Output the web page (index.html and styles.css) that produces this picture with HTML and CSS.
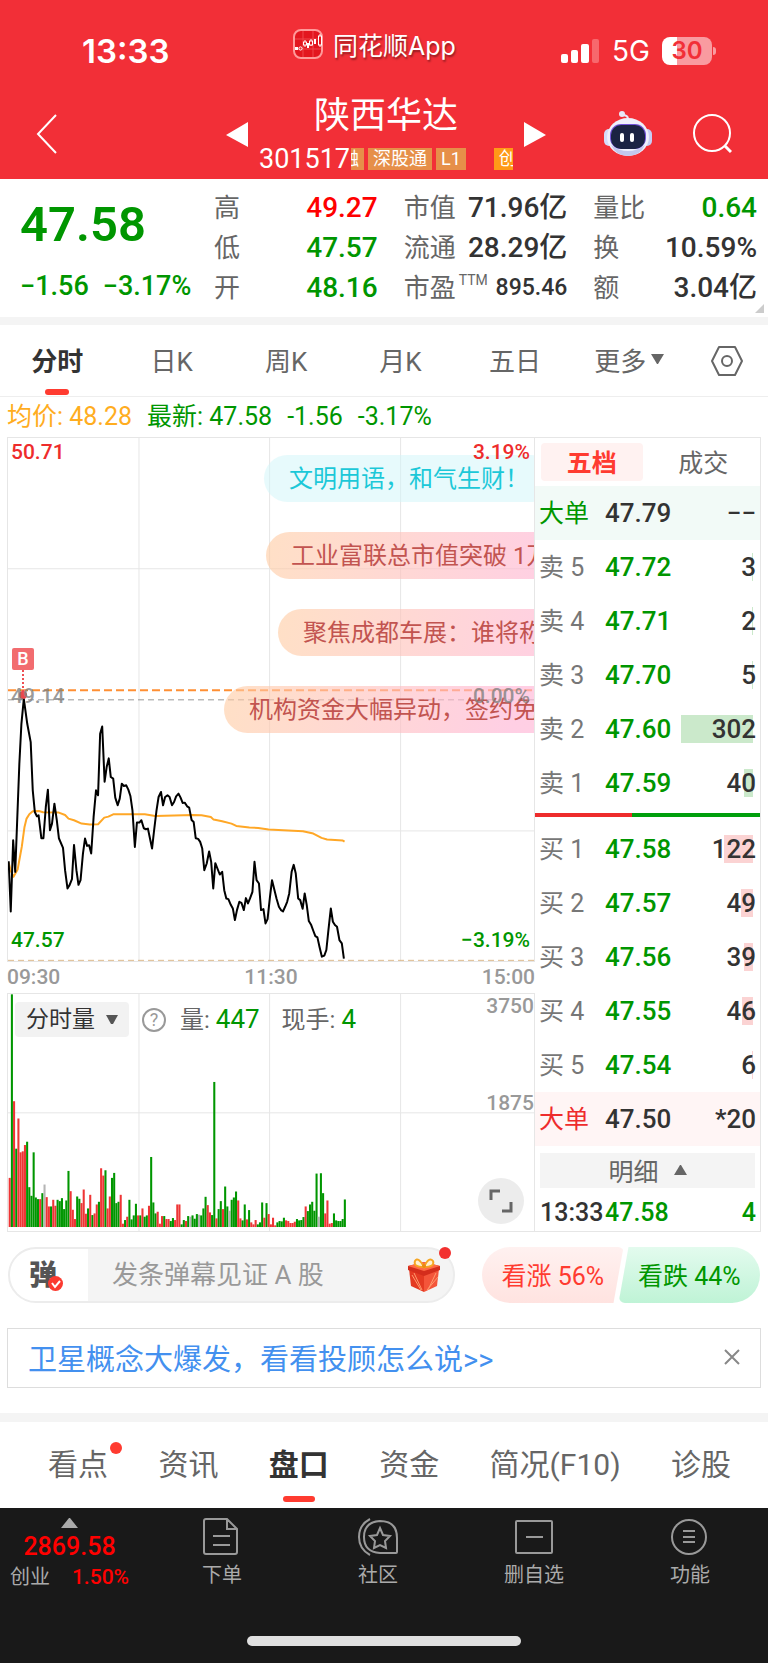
FILE: index.html
```html
<!DOCTYPE html>
<html lang="zh-CN">
<head>
<meta charset="UTF-8">
<meta name="viewport" content="width=device-width, initial-scale=1.0">
<title>陕西华达 301517</title>
<link rel="stylesheet" href="styles.css">
</head>
<body>
<header class="header">
    <div class="status">
        <span class="clock">13:33</span>
        <span class="app">
            <svg width="30" height="30" viewBox="0 0 30 30">
                <rect x="1" y="1" width="28" height="28" rx="7" fill="#e3161f" stroke="#ff9a9a" stroke-width="2"/>
                <path d="M10 2v26M20 2v26M2 10h26M2 20h26" stroke="#f0474d" stroke-width="1"/>
                <g stroke="#fff" fill="none"><circle cx="7.500" cy="19.500" r="1.600"/><path d="M12 11v7M18 10v7M27 5v13"/><rect x="10.500" y="13" width="3" height="3" fill="#e3161f"/><rect x="16.500" y="12" width="3" height="4" fill="#e3161f"/><rect x="25.500" y="7" width="3" height="9" fill="#e3161f"/></g>
                <path d="M2 18h3v3H2zM14 14h2v5h-2zM21 10h2v5h-2z" fill="#fff"/>
            </svg>
            同花顺App
        </span>
        <span class="signal">
            <svg width="40" height="26" viewBox="0 0 40 26">
                <g fill="#fff"><rect x="1" y="16" width="7" height="9" rx="2"/><rect x="11" y="12" width="7" height="13" rx="2"/><rect x="21" y="6" width="8" height="19" rx="2"/></g>
                <rect x="32" y="1" width="7" height="24" rx="2" fill="#f7686d"/>
            </svg>
            <span>5G</span>
            <span class="battery">30</span>
        </span>
    </div>
    <nav class="nav">
        <button class="icon back" aria-label="返回">
            <svg width="24" height="42" viewBox="0 0 24 42"><path d="M22 2L4 21l18 19" fill="none" stroke="#fff" stroke-width="2"/></svg>
        </button>
        <div class="stock">
            <button class="icon" aria-label="上一只"><svg width="22" height="25" viewBox="0 0 22 25"><path d="M22 0v25L0 13z" fill="#fff"/></svg></button>
            <div class="stock-name">
                <h1>陕西华达</h1>
                <div class="code">
                    <span>301517</span>
                    <div class="tags">
                        <span class="tag cut">融</span>
                        <span class="tag">深股通</span>
                        <span class="tag">L1</span>
                        <span class="tag hot">创</span>
                    </div>
                </div>
            </div>
            <button class="icon" aria-label="下一只"><svg width="22" height="25" viewBox="0 0 22 25"><path d="M0 0v25l22-12z" fill="#fff"/></svg></button>
        </div>
        <div class="actions">
            <button class="icon" aria-label="智能助手">
                <svg width="48" height="46" viewBox="0 0 48 46">
                    <path d="M24 8Q24 4 18 4" stroke="#e8e8f8" stroke-width="2" fill="none"/>
                    <circle cx="18" cy="3" r="3" fill="#e8e8f8"/>
                    <rect x="0" y="18" width="10" height="17" rx="5" fill="#d5dcfa"/><rect x="38" y="18" width="10" height="17" rx="5" fill="#c7cdf4"/>
                    <ellipse cx="24" cy="26" rx="21" ry="19" fill="#eff0fc"/>
                    <path d="M7 34q5 11 17 11t17-11q-8 6-17 6T7 34z" fill="#c3c7ee"/>
                    <rect x="6" y="13" width="36" height="25" rx="11" fill="#7252d8"/>
                    <rect x="7" y="14" width="34" height="24" rx="10" fill="#1b2343"/>
                    <rect x="16" y="22" width="4" height="9" rx="2" fill="#fff"/><rect x="26" y="22" width="4" height="9" rx="2" fill="#fff"/>
                </svg>
            </button>
            <button class="icon" aria-label="搜索">
                <svg width="40" height="40" viewBox="0 0 40 40" fill="none" stroke="#fff" stroke-width="2"><circle cx="20" cy="19" r="18"/><path d="M33 32l6 6" stroke-width="3"/></svg>
            </button>
        </div>
    </nav>
</header>

<section class="quote">
    <div class="price">
        <strong>47.58</strong>
        <p><span>−1.56</span><span>−3.17%</span></p>
    </div>
    <dl>
        <div><dt>高</dt><dd class="up">49.27</dd></div>
        <div><dt>低</dt><dd class="down">47.57</dd></div>
        <div><dt>开</dt><dd class="down">48.16</dd></div>
    </dl>
    <dl>
        <div><dt>市值</dt><dd>71.96亿</dd></div>
        <div><dt>流通</dt><dd>28.29亿</dd></div>
        <div><dt>市盈<sup>TTM</sup></dt><dd class="small">895.46</dd></div>
    </dl>
    <dl>
        <div><dt>量比</dt><dd class="down">0.64</dd></div>
        <div><dt>换</dt><dd>10.59%</dd></div>
        <div><dt>额</dt><dd>3.04亿</dd></div>
    </dl>
    <i class="corner"></i>
</section>

<nav class="periods">
    <button class="active">分时</button>
    <button>日K</button>
    <button>周K</button>
    <button>月K</button>
    <button>五日</button>
    <button>更多<svg width="13" height="10" viewBox="0 0 13 10"><path d="M0 0h13L7 10H6z" fill="#666"/></svg></button>
    <button class="settings" aria-label="设置">
        <svg width="34" height="32" viewBox="0 0 34 32" fill="none" stroke="#666" stroke-width="2"><path d="M9 2h16l7 14-7 14H9L2 16z" stroke-linejoin="round"/><circle cx="17" cy="16" r="5"/></svg>
    </button>
</nav>

<p class="latest"><span class="avg">均价: 48.28</span><span>最新: 47.58</span><span>-1.56</span><span>-3.17%</span></p>

<main class="market">
    <div class="charts">
        <div class="chart trend">
            <svg class="plot" viewBox="0 0 1530 1572" preserveAspectRatio="none">
                <path class="grid" d="M381 0V1572M761 0V1572M1142 0V1572M0 393H1530M0 1181H1530"/>
                <path d="M0 787H1530" stroke="#999" stroke-dasharray="6 4"/>
                <path d="M0 1570H1530" stroke="#dcb88a" stroke-dasharray="6 4"/>
                <g transform="translate(-22 729)" fill="none" stroke-linejoin="round">
                    <path stroke="#ffa726" stroke-width="2" d="M24 548L30 572L38 590L50 568L62 500L70 440L76 415L84 402L94 393L112 392L124 396L170 397L188 404L198 415L214 420L236 430L260 433L284 432L302 412L314 409L328 402L420 402L450 407L560 404L585 405L612 410L620 418L645 423L672 430L686 437L724 442L750 443L780 448L880 453L910 460L934 473L950 478L996 481L1001 484"/>
                    <path stroke="#000" stroke-width="2" d="M24 543L30 694L37 480L43 575L55 250L61 130L68 55L78 130L88 185L94 330L100 395L106 408L111 405L119 474L125 474L132 380L138 328L144 450L150 430L157 370L164 420L170 474L182 503L188 570L195 625L201 615L208 597L214 494L221 570L227 614L233 600L240 520L246 475L252 497L258 495L264 520L271 410L278 330L284 345L290 160L296 138L303 304L309 260L315 234L321 290L328 295L334 352L341 375L347 355L353 310L359 317L366 315L372 328L378 347L384 390L391 500L397 427L404 427L410 420L417 444L423 447L429 445L435 475L441 505L447 450L454 390L460 350L467 335L473 375L479 350L486 345L492 350L499 375L505 365L511 348L518 340L524 352L530 368L536 367L543 378L549 382L556 419L562 425L568 474L575 476L581 485L587 505L593 570L600 550L607 514L613 545L619 625L625 549L638 583L645 575L651 630L657 655L663 657L670 674L676 685L682 720L688 690L695 665L701 668L708 690L714 654L720 670L726 655L733 635L739 545L745 600L752 610L758 690L765 687L771 730L777 717L784 650L790 600L803 655L810 680L816 690L822 694L828 680L834 665L840 640L847 575L853 554L859 580L866 655L872 660L879 686L885 640L891 675L897 723L904 735L910 752L916 768L922 772L928 800L935 830L942 827L948 810L954 750L961 685L967 725L973 735L979 740L986 780L993 790L999 836"/>
                </g>
                <path d="M0 758H1530" stroke="#ff8f33" stroke-width="2" stroke-dasharray="8 4"/>
            </svg>
            <div class="mark"><b>B</b></div>
            <div class="barrage">
                <span class="blue">文明用语，和气生财！</span>
                <span class="b2">工业富联总市值突破 1万亿</span>
                <span class="b3">聚焦成都车展：谁将称王</span>
                <span class="b4">机构资金大幅异动，签约免费</span>
            </div>
            <span class="label top left up">50.71</span>
            <span class="label top right up">3.19%</span>
            <span class="label middle left">49.14</span>
            <span class="label middle right">0.00%</span>
            <span class="label bottom left down">47.57</span>
            <span class="label bottom right down">−3.19%</span>
        </div>
        <div class="times"><span>09:30</span><span>11:30</span><span>15:00</span></div>
        <div class="chart volume">
            <svg class="plot" viewBox="0 0 1530 714" preserveAspectRatio="none">
                <path class="grid" d="M381 0V714M761 0V714M1142 0V714M0 358H1530"/>
                <g id="bars"></g>
            </svg>
            <div class="volume-info">
                <button>分时量<svg width="12" height="9" viewBox="0 0 12 9"><path d="M0 0h12L7 9H5z" fill="#555"/></svg></button>
                <i>?</i>
                <span>量: <em>447</em></span>
                <span>现手: <em>4</em></span>
            </div>
            <span class="scale first">3750</span>
            <span class="scale second">1875</span>
            <button class="expand" aria-label="全屏">
                <svg width="24" height="24" viewBox="0 0 24 24" fill="none" stroke="#666" stroke-width="3"><path d="M2 11V2h9M22 13v9h-9"/></svg>
            </button>
        </div>
    </div>

    <aside class="book">
        <div class="book-tabs"><button class="active">五档</button><button>成交</button></div>
        <table>
            <tr class="big sell"><th>大单</th><td>47.79</td><td>−−</td></tr>
            <tr class="ask"><th>卖 5</th><td>47.72</td><td style="--w: 1px">3</td></tr>
            <tr class="ask"><th>卖 4</th><td>47.71</td><td style="--w: 1px">2</td></tr>
            <tr class="ask"><th>卖 3</th><td>47.70</td><td style="--w: 1px">5</td></tr>
            <tr class="ask"><th>卖 2</th><td>47.60</td><td style="--w: 72px">302</td></tr>
            <tr class="ask"><th>卖 1</th><td>47.59</td><td style="--w: 9px">40</td></tr>
        </table>
        <div class="ratio"></div>
        <table>
            <tr class="bid"><th>买 1</th><td>47.58</td><td style="--w: 29px">122</td></tr>
            <tr class="bid"><th>买 2</th><td>47.57</td><td style="--w: 12px">49</td></tr>
            <tr class="bid"><th>买 3</th><td>47.56</td><td style="--w: 9px">39</td></tr>
            <tr class="bid"><th>买 4</th><td>47.55</td><td style="--w: 11px">46</td></tr>
            <tr class="bid"><th>买 5</th><td>47.54</td><td style="--w: 1px">6</td></tr>
            <tr class="big buy"><th>大单</th><td>47.50</td><td>*20</td></tr>
        </table>
        <button class="detail">明细<svg width="13" height="10" viewBox="0 0 13 10"><path d="M0 10h13L7 0H6z" fill="#666"/></svg></button>
        <p class="deal"><span>13:33</span><span class="down">47.58</span><span class="down">4</span></p>
    </aside>
</main>

<section class="talk">
    <div class="talk-box">
        <button class="switch" aria-label="弹幕开关">弹<svg width="15" height="15" viewBox="0 0 15 15"><circle cx="7.500" cy="7.500" r="7.500" fill="#fb3a30"/><path d="M4 7l3 4 5-6" fill="none" stroke="#fff" stroke-width="2"/></svg></button>
        <input type="text" placeholder="发条弹幕见证 A 股" aria-label="发条弹幕">
        <button class="icon gift" aria-label="礼物">
            <svg width="34" height="34" viewBox="0 0 34 34">
                <path d="M2 11l15 6v17L4 28z" fill="#e43a22"/><path d="M32 11l-15 6v17l13-6z" fill="#f4553a"/>
                <path d="M5 17l9 15M7 15l8 17M29 15l-8 17M31 19L20 32" stroke="#ff9a6e" stroke-width="1"/>
                <path d="M1 8l16-4 16 4v4l-16 6L1 12z" fill="#d42d1c"/><path d="M1 8l16-4 16 4-16 5z" fill="#ff6a45"/>
                <path d="M17 9Q6 9 8 3q3-5 9 6Q22-2 26 3q2 6-9 6z" fill="#fff0d0" stroke="#f6a623" stroke-width="2"/><circle cx="17" cy="8" r="2" fill="#e98b12"/>
            </svg>
        </button>
        <i class="dot"></i>
    </div>
    <div class="votes">
        <button class="vote-up">看涨 56%</button>
        <button class="vote-down">看跌 44%</button>
    </div>
</section>

<section class="notice">
    <a href="#">卫星概念大爆发，看看投顾怎么说&gt;&gt;</a>
    <button class="icon" aria-label="关闭"><svg width="16" height="16" viewBox="0 0 16 16"><path d="M1 1l14 14M15 1L1 15" stroke="#888" stroke-width="2"/></svg></button>
</section>

<nav class="sections">
    <a href="#">看点<i class="dot"></i></a>
    <a href="#">资讯</a>
    <a href="#" class="active">盘口</a>
    <a href="#">资金</a>
    <a href="#">简况(F10)</a>
    <a href="#">诊股</a>
</nav>

<footer class="footer">
    <div class="index">
        <svg width="17" height="10" viewBox="0 0 17 10"><path d="M0 10L8 0h1l8 10z" fill="#aaa"/></svg>
        <strong>2869.58</strong>
        <p><span>创业</span><b>1.50%</b></p>
    </div>
    <a href="#">
        <svg width="40" height="38" viewBox="0 0 40 38"><path d="M4 1h21l10 10v23q0 2-2 2H4q-2 0-2-2V3q0-2 2-2zM25 1v10h10M11 18h17M11 27h17"/></svg>
        下单
    </a>
    <a href="#">
        <svg width="40" height="38" viewBox="0 0 40 38"><path d="M12 1Q1 7 1 19t11 18M22 3q17 0 17 17v14q0 1-1 1H22Q6 34 6 19T22 3zM22 10l3 7 7 1-5 5 1 7-6-3-6 3 1-7-5-5 7-1z"/></svg>
        社区
    </a>
    <a href="#">
        <svg width="40" height="38" viewBox="0 0 40 38"><rect x="2" y="3" width="36" height="32" rx="1"/><path d="M12 19h17"/></svg>
        删自选
    </a>
    <a href="#">
        <svg width="40" height="38" viewBox="0 0 40 38"><circle cx="19" cy="19" r="17"/><path d="M13 13h12M13 19h12M13 24h12"/></svg>
        功能
    </a>
    <div class="home-bar"></div>
</footer>

<script src="script.js"></script>
</body>
</html>
```

FILE: styles.css
```css
* {
    box-sizing: border-box;
}
body {
    margin: 0;
    font-family: Roboto, "Noto Sans CJK SC", sans-serif;
    color: #333;
    background-color: #fff;
}
h1, p, dl, dd {
    margin: 0;
}
i, em {
    font-style: normal;
}
svg {
    display: block;
    flex: none;
}
a {
    color: inherit;
    text-decoration: none;
}
button {
    padding: 0;
    border: none;
    background: none;
    color: inherit;
    font: inherit;
    cursor: pointer;
}
.up {
    color: #ee2c2c;
}
.down {
    color: #009600;
}
.dot {
    position: absolute;
    width: 12px;
    height: 12px;
    border-radius: 50%;
    background-color: #f2302f;
}

/* header */
.header {
    background-color: #f22f37;
    color: #fff;
}
.status {
    display: grid;
    grid-template-columns: 211px auto 1fr;
    align-items: center;
    height: 84px;
    padding: 18px 52px 0 82px;
    font-family: Inter, "Noto Sans CJK SC", sans-serif;
}
.clock {
    font-size: 33px;
    font-weight: 600;
}
.app {
    display: flex;
    align-items: center;
    align-self: start;
    gap: 10px;
    height: 52px;
    font-size: 25px;
    text-shadow: 1px 2px 2px rgba(0, 0, 0, 0.4);
}
.signal {
    display: flex;
    align-items: center;
    justify-content: flex-end;
    gap: 12px;
    font-size: 28px;
}
.battery {
    position: relative;
    width: 50px;
    height: 28px;
    margin-right: 4px;
    border-radius: 8px;
    background: linear-gradient(90deg, #fff 30%, #f99ba0 30%);
    color: #f22f37;
    font-size: 24px;
    font-weight: 600;
    line-height: 28px;
    text-align: center;
}
.battery::after {
    content: "";
    position: absolute;
    top: 10px;
    right: -4px;
    width: 3px;
    height: 8px;
    border-radius: 0 3px 3px 0;
    background-color: #f99ba0;
}
.nav {
    display: grid;
    grid-template-columns: 192px auto 1fr;
    align-items: center;
    height: 95px;
    padding: 5px 36px 0 34px;
}
.back {
    justify-self: start;
}
.stock {
    display: flex;
    align-items: center;
    gap: 11px;
}
.stock-name {
    width: 254px;
}
.stock h1 {
    font-size: 36px;
    font-weight: 400;
    line-height: 40px;
    text-align: center;
}
.code {
    display: flex;
    align-items: center;
    justify-content: space-between;
    height: 26px;
    margin-top: 10px;
    font-size: 27px;
}
.tags {
    display: flex;
    gap: 4px;
    width: 162px;
    overflow: hidden;
}
.tag {
    flex: none;
    height: 22px;
    padding: 0 5px;
    background-color: #e68f49;
    font-size: 18px;
    line-height: 21px;
}
.tag.cut {
    display: flex;
    justify-content: flex-end;
    width: 13px;
    overflow: hidden;
}
.tag.hot {
    margin-left: 24px;
    background-color: #ff9a17;
}
.actions {
    display: flex;
    align-items: center;
    justify-content: flex-end;
    gap: 40px;
}

/* quote */
.quote {
    position: relative;
    display: flex;
    gap: 26px;
    padding: 9px 11px 9px 20px;
    border-bottom: 8px solid #f4f4f4;
}
.price {
    width: 168px;
    color: #009600;
    font-weight: 500;
    white-space: nowrap;
}
.price strong {
    display: block;
    margin-top: 7px;
    font-size: 49px;
    font-weight: 600;
    line-height: 60px;
}
.price p {
    display: flex;
    gap: 14px;
    margin-top: 11px;
    font-size: 27px;
    line-height: 40px;
}
.quote dl {
    flex: 1;
}
.quote dl div {
    display: flex;
    justify-content: space-between;
    height: 40px;
    line-height: 40px;
    white-space: nowrap;
}
.quote dt {
    color: #666;
    font-size: 26px;
}
.quote sup {
    font-size: 14px;
    line-height: 14px;
    vertical-align: 12px;
    margin-left: 3px;
}
.quote dd {
    font-size: 28px;
    font-weight: 500;
}
.quote dd.up {
    color: #f00;
}
.quote dd.small {
    font-size: 23px;
}
.corner {
    position: absolute;
    right: 4px;
    bottom: 4px;
    border-left: 9px solid transparent;
    border-bottom: 9px solid #ccc;
}
.periods {
    display: flex;
    height: 72px;
    border-bottom: 1px solid #eee;
    color: #666;
    font-size: 26px;
}
.periods button {
    position: relative;
    display: flex;
    align-items: center;
    justify-content: center;
    gap: 5px;
    width: 14.9%;
    padding-bottom: 3px;
}
.periods .settings {
    flex: 1;
    padding-bottom: 0;
}
.periods .active {
    color: #333;
    font-weight: 700;
}
.active::after {
    content: "";
    position: absolute;
    bottom: 1px;
    left: calc(50% - 12px);
    width: 24px;
    height: 6px;
    border-radius: 3px;
    background-color: #ff3b30;
}
.latest {
    display: flex;
    gap: 15px;
    padding-left: 7px;
    color: #009600;
    font-size: 25px;
    line-height: 40px;
}
.avg {
    color: #ffad1f;
}

/* charts */
.market {
    display: grid;
    grid-template-columns: 1fr 226px;
    padding: 0 7px;
}
.chart {
    position: relative;
    border: 1px solid #e6e6e6;
}
.trend {
    height: 525px;
}
.volume {
    height: 239px;
}
.plot {
    width: 100%;
    height: 100%;
}
.plot path {
    fill: none;
    vector-effect: non-scaling-stroke;
}
.grid {
    stroke: #e6e6e6;
}
.label {
    position: absolute;
    color: rgba(128, 128, 128, 0.8);
    font-size: 21px;
    font-weight: 500;
    line-height: 24px;
}
.label.up {
    color: #ee2c2c;
}
.label.down {
    color: #009600;
}
.label.left {
    left: 3px;
}
.label.right {
    right: 4px;
}
.label.top {
    top: 2px;
}
.label.middle {
    top: 246px;
}
.label.bottom {
    bottom: 9px;
}
.mark {
    position: absolute;
    top: 210px;
    left: 4px;
    width: 22px;
    height: 51px;
}
.mark b {
    display: block;
    height: 22px;
    border-radius: 2px;
    background-color: #f26c6f;
    color: #fff;
    font-size: 18px;
    font-weight: 500;
    line-height: 22px;
    text-align: center;
}
.mark::before {
    content: "";
    position: absolute;
    top: 22px;
    left: 10px;
    height: 22px;
    border-left: 2px dotted #ee4f53;
}
.mark::after {
    content: "";
    position: absolute;
    bottom: 0;
    left: 7px;
    width: 8px;
    height: 8px;
    border-radius: 50%;
    background-color: #e9494d;
}
.barrage {
    position: absolute;
    inset: 0;
    display: flex;
    flex-direction: column;
    align-items: flex-start;
    gap: 30px;
    padding-top: 17px;
    overflow: hidden;
}
.barrage span {
    flex: none;
    height: 47px;
    padding: 0 25px;
    border-radius: 24px;
    background: linear-gradient(100deg, rgba(255, 203, 160, 0.6), rgba(255, 182, 214, 0.66) 290px);
    color: #c25450;
    font-size: 24px;
    line-height: 49px;
    white-space: nowrap;
}
.barrage .blue {
    margin-left: 256px;
    background: rgba(208, 245, 250, 0.5);
    color: #1cc8d8;
}
.barrage .b2 {
    margin-left: 258px;
}
.barrage .b3 {
    margin-left: 270px;
}
.barrage .b4 {
    margin-left: 216px;
}
.times {
    display: flex;
    justify-content: space-between;
    color: #999;
    font-size: 21px;
    font-weight: 500;
    line-height: 31px;
}
.volume-info {
    position: absolute;
    top: 7px;
    left: 7px;
    display: flex;
    align-items: center;
    color: #666;
    font-size: 24px;
    line-height: 36px;
}
.volume-info button {
    display: flex;
    align-items: center;
    justify-content: center;
    gap: 11px;
    width: 114px;
    height: 35px;
    border-radius: 4px;
    background-color: #f2f2f2;
    color: #333;
    font-size: 23px;
}
.volume-info i {
    width: 24px;
    height: 24px;
    margin-left: 13px;
    border: 2px solid #999;
    border-radius: 50%;
    color: #999;
    font-size: 18px;
    line-height: 20px;
    text-align: center;
}
.volume-info span {
    margin-left: 14px;
}
.volume-info span + span {
    margin-left: 22px;
}
.volume-info em {
    color: #009600;
    font-size: 26px;
}
.scale {
    position: absolute;
    right: 0;
    color: #999;
    font-size: 21px;
    font-weight: 500;
    line-height: 24px;
}
.scale.first {
    top: 0;
}
.scale.second {
    top: 97px;
}
.expand {
    position: absolute;
    right: 10px;
    bottom: 7px;
    display: flex;
    align-items: center;
    justify-content: center;
    width: 46px;
    height: 46px;
    border-radius: 50%;
    background-color: #ececec;
}

/* order book */
.book {
    border: 1px solid #e6e6e6;
    border-left: none;
}
.book-tabs {
    display: flex;
    padding: 5px 6px;
    gap: 10px;
    color: #666;
    font-size: 25px;
}
.book-tabs button {
    flex: 1;
    height: 38px;
    padding-bottom: 4px;
}
.book-tabs .active {
    position: static;
    border-radius: 4px;
    background-color: #fff2f1;
    color: #ff3b30;
    font-weight: 700;
}
.book-tabs .active::after {
    content: none;
}
.book table {
    width: 100%;
    table-layout: fixed;
    border-collapse: collapse;
}
.book th, .book td {
    height: 54px;
    padding: 0;
    font-size: 26px;
    font-weight: 500;
    text-align: left;
}
.book th {
    width: 70px;
    padding: 0 0 4px 4px;
    color: #777;
    font-size: 25px;
    font-weight: 400;
}
.book td:last-child {
    width: 84px;
    padding-right: 4px;
    text-align: right;
}
.sell {
    background-color: #f2faf7;
}
.buy {
    background-color: #fff5f5;
}
.book .sell th {
    color: #009600;
}
.book .buy th {
    color: #ee2c2c;
}
.ask td, .bid td {
    color: #009600;
}
.ask td:last-child, .bid td:last-child {
    background: linear-gradient(#cbe9cb, #cbe9cb) right 7px center / var(--w) 28px no-repeat;
    color: #333;
}
.bid td:last-child {
    background-image: linear-gradient(#fbd3d3, #fbd3d3);
}
.ratio {
    height: 4px;
    margin: 3px 0 5px;
    background: linear-gradient(90deg, #ee2c2c 43%, #009f0c 43%);
}
.detail {
    display: flex;
    align-items: center;
    justify-content: center;
    gap: 15px;
    width: calc(100% - 10px);
    height: 35px;
    margin: 7px 5px 0;
    padding-bottom: 2px;
    background-color: #f4f4f4;
    color: #666;
    font-size: 25px;
}
.deal {
    display: flex;
    padding: 7px 4px 0 5px;
    font-size: 25px;
    font-weight: 500;
    line-height: 36px;
}
.deal span:first-child {
    width: 65px;
}
.deal span:last-child {
    margin-left: auto;
}

/* barrage input and votes */
.talk {
    display: flex;
    gap: 27px;
    padding: 15px 8px 0;
}
.talk-box {
    position: relative;
    display: flex;
    align-items: center;
    flex: 1;
    min-width: 0;
    height: 56px;
    border: 2px solid #ececec;
    border-radius: 28px;
    background: linear-gradient(90deg, #fff 78px, #f4f4f4 78px);
}
.switch {
    position: relative;
    flex: none;
    width: 78px;
    padding: 0 12px 4px 0;
    color: #555;
    font-size: 28px;
    font-weight: 900;
}
.switch svg {
    position: absolute;
    right: 25px;
    bottom: 6px;
}
.talk input {
    flex: 1;
    min-width: 0;
    padding: 0 0 0 24px;
    border: none;
    outline: none;
    background: none;
    font: inherit;
    font-size: 26px;
}
.talk input::placeholder {
    color: #999;
}
.gift {
    margin-right: 12px;
}
.talk .dot {
    top: -2px;
    right: 2px;
}
.votes {
    display: flex;
    flex: none;
    width: 278px;
    font-size: 25px;
}
.votes button {
    flex: 1;
    height: 56px;
    padding-bottom: 2px;
}
.vote-up {
    margin-right: -5px;
    border-radius: 28px 6px 6px 28px;
    background: linear-gradient(#fff1f0, #ffe3e0);
    clip-path: polygon(0 0, 100% 0, calc(100% - 10px) 100%, 0 100%);
    color: #ff3b30;
}
.vote-down {
    border-radius: 6px 28px 28px 6px;
    background: linear-gradient(#e3fbee, #bff3d6);
    clip-path: polygon(10px 0, 100% 0, 100% 100%, 0 100%);
    color: #009600;
}
.notice {
    display: flex;
    align-items: center;
    justify-content: space-between;
    height: 60px;
    margin: 25px 7px;
    padding: 0 20px 2px;
    border: 1px solid #ddd;
    color: #4390ef;
    font-size: 29px;
}

/* bottom */
.sections {
    display: flex;
    justify-content: space-between;
    height: 95px;
    padding: 0 37px 0 48px;
    border-top: 9px solid #f4f4f4;
    color: #666;
    font-size: 30px;
    line-height: 86px;
}
.sections a {
    position: relative;
}
.sections .active {
    color: #333;
    font-weight: 700;
}
.sections .active::after {
    bottom: 6px;
    left: calc(50% - 16px);
    width: 32px;
}
.sections .dot {
    top: 20px;
    right: -14px;
    background-color: #ff3b30;
}
.footer {
    position: relative;
    display: grid;
    grid-template-columns: 144px repeat(4, 1fr);
    height: 155px;
    padding-top: 10px;
    background-color: #191919;
    color: #aaa;
    font-size: 20px;
}
.footer a {
    display: flex;
    flex-direction: column;
    align-items: center;
    gap: 4px;
    line-height: 30px;
}
.footer a svg {
    fill: none;
    stroke: #999;
    stroke-width: 2;
}
.index {
    display: flex;
    flex-direction: column;
    align-items: center;
    padding-right: 5px;
    line-height: 30px;
}
.index strong {
    margin-top: 4px;
    color: #f00;
    font-size: 25px;
    font-weight: 500;
}
.index p {
    display: flex;
    gap: 22px;
}
.index b {
    color: #f00;
    font-size: 21px;
    font-weight: 500;
}
.home-bar {
    position: absolute;
    bottom: 17px;
    left: calc(50% - 137px);
    width: 274px;
    height: 10px;
    border-radius: 5px;
    background-color: #e0e0e0;
}
```

FILE: script.js
```js
// one entry per minute: r = up, g = down, n = flat, followed by the bar height
var volumes = ("r148 g701 r379 g236 r327 r225 r228 r247 g257 g120 g94 g225 g89 g84 r84 g102 n128 r90 r62 g62 " +
    "r82 r64 g82 g78 g87 g54 g80 g169 r108 r52 r24 g92 g85 r72 r113 r40 g56 r97 g36 r41 " +
    "r68 g76 r177 r155 g171 r56 r92 g148 g163 g72 g76 r97 r10 g21 r31 g82 g23 g35 g70 r35 " +
    "g35 r56 g31 g35 r64 g211 g74 g41 r46 r10 r33 g33 r24 r24 g18 g27 r21 r68 r68 g8 " +
    "g21 r18 g33 n31 g35 g25 g39 n37 g35 g56 g91 r66 r44 g36 g437 r26 g54 g78 r54 g122 " +
    "g62 n49 g82 g89 g107 r80 r26 g20 g68 r23 g51 r14 r8 r21 g8 g14 g74 r28 g72 r39 " +
    "r8 r28 r5 g14 g18 g17 g28 r20 r18 r12 r12 r16 g24 g20 g21 g30 r62 g48 g68 g76 " +
    "g49 g161 n31 g162 g102 r41 r80 r10 r12 g41 g20 g18 g18 g24 g83").split(" ");
var colors = { r: "#ee3535", g: "#009600", n: "#b5b5b5" };
var group = document.getElementById("bars");

volumes.forEach(function(item, i) {
    var height = Number(item.slice(1));
    var bar = document.createElementNS("http://www.w3.org/2000/svg", "rect");
    bar.setAttribute("x", 2 + i * 6.33);
    bar.setAttribute("y", 702 - height);
    bar.setAttribute("width", 6);
    bar.setAttribute("height", height);
    bar.setAttribute("fill", colors[item[0]]);
    group.appendChild(bar);
});
```
